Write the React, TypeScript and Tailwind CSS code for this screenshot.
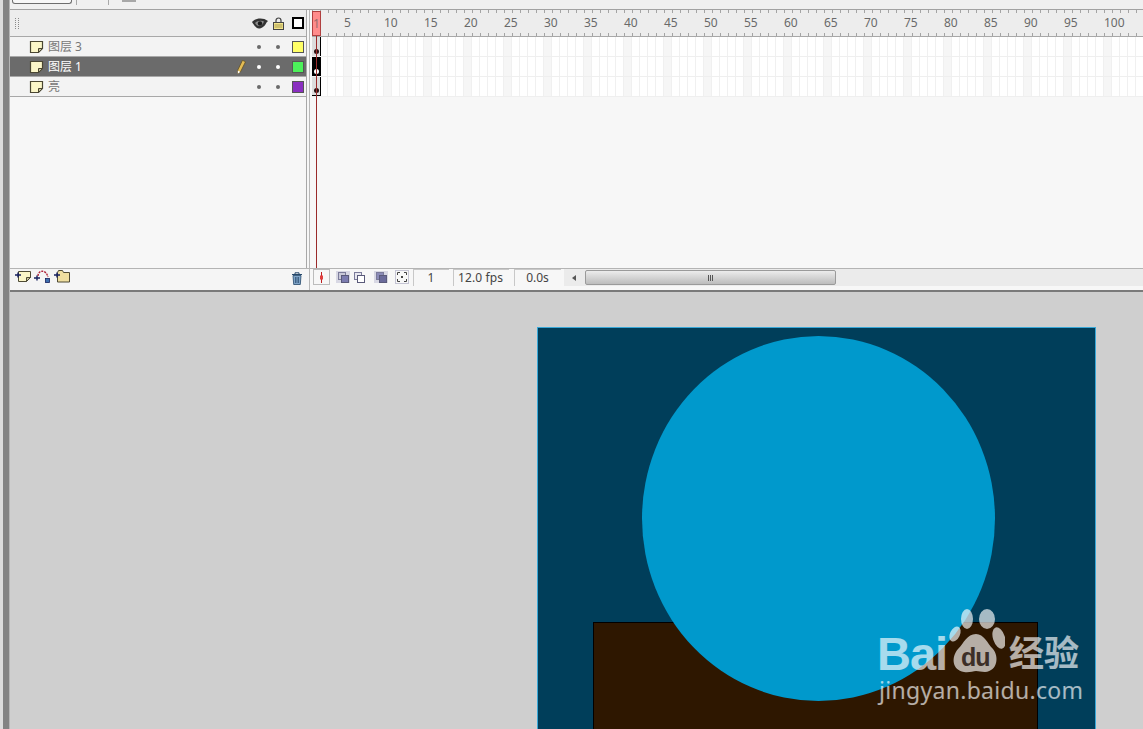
const cjk = "font-['Noto_Sans','Noto_Sans_CJK_SC',sans-serif]";

const frames = Array.from({ length: 104 }, (_, i) => i + 1);
const gripDots = Array.from({ length: 12 }, (_, i) => i);

const layers = [
  { name: "图层 3", color: "bg-[#ffff66]", selected: false },
  { name: "图层 1", color: "bg-[#4cf05a]", selected: true },
  { name: "亮", color: "bg-[#8a2fc0]", selected: false }
];

const PageIcon = () => <svg width="15" height="14" viewBox="0 0 15 14" className="shrink-0">
    <path d="M1.500 1.500h12v7l-4 4h-8z" fill="#fbf6c8" stroke="#4a4632" strokeWidth="1.200" />
    <path d="M13.500 8.500l-4 4v-4z" fill="#c9c49a" stroke="#4a4632" strokeWidth="1" />
  </svg>;

const EyeIcon = () => <svg width="16" height="11" viewBox="0 0 16 11">
    <path d="M0 4C3 0 11 -1 16 3L14.500 4.500C13 8 10 10.500 7 10.500C4 10.500 2 7 0 4z" fill="#333" />
    <path d="M3 5c2-2 6-3 9-1.500-1 3-3 4.500-5 4.500S4 6.500 3 5z" fill="#8a8a8a" />
    <circle cx="8" cy="5.500" r="2.200" fill="#1c1c1c" />
  </svg>;

const LockIcon = () => <svg width="11" height="13" viewBox="0 0 11 13">
    <path d="M3 6V3.500a2.500 2.500 0 0 1 5 0V6" fill="none" stroke="#444" strokeWidth="1.200" />
    <rect x="0.500" y="5.500" width="10" height="7" fill="#f4e68c" stroke="#444" />
    <path d="M1.500 8h8M1.500 10h8" stroke="#a89a50" />
  </svg>;

const PencilIcon = () => <svg width="9" height="14" viewBox="0 0 9 14">
    <path d="M5.500 0.300l3 1.500L3.500 11.800 0.800 13.700 0.800 10z" fill="#e3bc55" stroke="#5a4a20" strokeWidth="0.700" />
    <path d="M0.800 10.500l2.400 1.400-2.400 1.800z" fill="#fff" />
  </svg>;

const AddPageIcon = () => <svg width="16" height="13" viewBox="0 0 16 13">
    <path d="M3.500 1.500h12v6l-4 4h-8z" fill="#fbf6c8" stroke="#4f4b35" />
    <path d="M15.500 7.500l-4 4v-4z" fill="#c9c49a" stroke="#4f4b35" />
    <path d="M0 5h6M3 2.500v5" stroke="#17215e" strokeWidth="1.400" />
  </svg>;

const AddGuideIcon = () => <svg width="17" height="13" viewBox="0 0 17 13">
    <path d="M4 6c0-6 8-7 10 1" fill="none" stroke="#b0243a" strokeWidth="1.400" strokeDasharray="2 1" />
    <path d="M0 8h6M3 5.500v5" stroke="#17215e" strokeWidth="1.400" />
    <rect x="11.500" y="8.500" width="4" height="4" fill="#3d6fae" stroke="#17215e" strokeWidth="0.800" />
  </svg>;

const AddFolderIcon = () => <svg width="16" height="13" viewBox="0 0 16 13">
    <path d="M3.500 12V2.500l1-2h4l1 2h6V12z" fill="#f0dfa0" stroke="#4f4b35" />
    <path d="M0 5h6M3 2.500v5" stroke="#17215e" strokeWidth="1.400" />
  </svg>;

const TrashIcon = () => <svg width="12" height="13" viewBox="0 0 12 13">
    <path d="M1 2.500h10M4 2V0.800h4V2" fill="none" stroke="#25476a" />
    <path d="M2 3.500h8l-0.700 9H2.700z" fill="#7fa4c8" stroke="#25476a" strokeWidth="0.800" />
    <path d="M4.500 5v6M6 5v6M7.500 5v6" stroke="#25476a" strokeWidth="0.700" />
  </svg>;

const OnionIcon = ({
  back,
  front
}: {
  back: string;
  front: string;
}) => <svg width="11" height="11" viewBox="0 0 11 11">
    <rect x="0.500" y="0.500" width="7" height="7" fill={back} stroke="#7b7b9a" />
    <rect x="3.500" y="3.500" width="7" height="7" fill={front} stroke="#5a5a7a" />
  </svg>;

const LayerRow = ({ name, color, selected }: { name: string; color: string; selected: boolean }) => {
  const dot = selected ? "bg-white" : "bg-[#6a6a6a]";
  return <div className={`flex h-5 items-center border-b border-[#a8a8a8] pl-[19px] ${selected ? "bg-[#6b6b6b] text-white" : "bg-[#f3f3f3] text-[#777]"}`}>
      <PageIcon />
      <span className={`ml-[4px] w-[189px] text-[12px] leading-none ${cjk}`}>{name}</span>
      <span className="flex w-[20px] justify-start">{selected && <PencilIcon />}</span>
      <span className={`h-1 w-1 rounded-full ${dot}`} />
      <span className={`ml-[15px] h-1 w-1 rounded-full ${dot}`} />
      <span className={`ml-[12px] h-[12px] w-[12px] border border-[#555] ${color}`} />
    </div>;
};

const FrameRow = ({ selected, bottom }: { selected: boolean; bottom?: boolean }) => <div className="flex h-5 border-b border-[#efefef] bg-white">
    <div className={`relative flex h-full w-[9px] shrink-0 items-end justify-center border-r border-black pb-[2px] ${selected ? "bg-black" : "bg-[#dcdcdc]"} ${bottom ? "border-b" : ""}`}>
      <span className={`h-[5px] w-[5px] rounded-full ${selected ? "bg-white" : "bg-[#2a1010]"}`} />
    </div>
    <div className="w-[7px] shrink-0 border-r border-[#f0f0f0]" />
    {frames.slice(2).map(n => <div key={n} className={`h-full w-2 shrink-0 border-r border-[#f0f0f0] ${n % 5 === 0 ? "bg-[#f6f6f6]" : ""}`} />)}
  </div>;

export default function App() {
  return <div className="relative flex h-[729px] w-[1143px] overflow-hidden bg-[#cecece]">
      <div className="flex w-[10px] shrink-0">
        <div className="w-[3px] bg-[#dcdcdc]" />
        <div className="w-[6px] bg-[#838383]" />
        <div className="w-px bg-[#b5b5b5]" />
      </div>

      <div className="flex min-w-0 flex-1 flex-col">
        {/* strip above the timeline */}
        <div className="flex h-[10px] shrink-0 border-b border-[#a2a2a2] bg-[#f0f0f0]">
          <div className="ml-[2px] h-[4px] w-[60px] rounded-b-[3px] border border-t-0 border-[#6e6e6e] bg-[#f7f7f7]" />
          <div className="ml-[4px] h-[5px] w-px bg-[#a8a8a8]" />
          <div className="ml-[31px] h-[5px] w-px bg-[#a8a8a8]" />
          <div className="ml-[13px] h-[2px] w-[14px] bg-[#a8a8a8]" />
        </div>

        {/* timeline */}
        <div className="flex h-[258px] shrink-0 bg-[#f7f7f7]">
          <div className="w-[297px] shrink-0 border-r border-[#a8a8a8]">
            <div className="flex h-[27px] items-center border-b border-[#a8a8a8] bg-[#ededed]">
              <div className="ml-[5px] grid w-[5px] grid-cols-2 gap-[1px]">
                {gripDots.map(i => <span key={i} className="h-px w-px bg-[#8a8a8a]" />)}
              </div>
              <div className="ml-[232px]"><EyeIcon /></div>
              <div className="ml-[5px]"><LockIcon /></div>
              <div className="ml-[8px] h-[12px] w-[12px] border-2 border-black bg-white" />
            </div>
            {layers.map(l => <LayerRow key={l.name} {...l} />)}
          </div>
          <div className="w-[3px] shrink-0 border-r border-[#b8b8b8]" />

          <div className="relative min-w-0 flex-1 overflow-hidden">
            <div className="ml-[2px] flex h-[27px] w-[900px] border-b border-[#a8a8a8] bg-[#ededed]">
              {frames.map(n => <div key={n} className="relative h-full w-2 shrink-0">
                  <span className="absolute left-0 top-0 h-[3px] w-px bg-[#a4a4a4]" />
                  <span className="absolute bottom-0 left-0 h-[3px] w-px bg-[#a4a4a4]" />
                  {(n % 5 === 0) && <span className={`absolute left-0 top-[6px] text-[12px] leading-[14px] text-[#6a6a6a] ${cjk}`}>{n}</span>}
                </div>)}
            </div>
            <div className="ml-[2px] w-[900px]">
              <FrameRow selected={false} />
              <FrameRow selected />
              <FrameRow selected={false} bottom />
            </div>
            {/* playhead */}
            <div className={`absolute left-[2px] top-[1px] flex h-[25px] w-[9px] items-center justify-center border border-[#b04040] bg-[#ff8c8c] text-[12px] leading-none text-[#9a6a6a] ${cjk}`}>1</div>
            <div className="absolute left-[6px] top-[26px] h-[232px] w-px bg-[#9a2a2a]" />
          </div>
        </div>

        {/* timeline footer */}
        <div className="flex h-[22px] shrink-0 border-t border-[#b4b4b4]">
          <div className="flex w-[297px] shrink-0 items-center gap-[3px] bg-[#f5f5f5] pb-[7px] pl-[5px]">
            <AddPageIcon />
            <AddGuideIcon />
            <AddFolderIcon />
            <div className="ml-[218px] mt-[5px]"><TrashIcon /></div>
          </div>
          <div className="w-[3px] shrink-0 border-r border-[#b8b8b8] bg-[#f5f5f5]" />
          <div className="flex min-w-0 flex-1 items-start bg-[#f7f7f7]">
            <div className="ml-[3px] flex h-[16px] w-[17px] items-center justify-center border border-[#bcbcbc]">
              <svg width="5" height="11" viewBox="0 0 5 11"><path d="M2.500 0v11" stroke="#c02020" /><rect x="1" y="3.500" width="3" height="4" fill="#e04040" /></svg>
            </div>
            <div className="ml-[6px] mt-[2px] flex h-3 w-[14px] items-center justify-center bg-[#d8d8e4]"><OnionIcon back="#c9c9d8" front="#7c7cb0" /></div>
            <div className="ml-[2px] mt-[2px] flex h-3 w-[14px] items-center justify-center"><OnionIcon back="#e8e8f0" front="#ffffff" /></div>
            <div className="ml-[8px] mt-[2px] flex h-3 w-[14px] items-center justify-center bg-[#d8d8e4]"><OnionIcon back="#8b8bb8" front="#6a6a9a" /></div>
            <div className="ml-[7px] mt-px flex h-[14px] w-[14px] items-center justify-center border border-[#c4c4d4]">
              <svg width="10" height="10" viewBox="0 0 10 10"><path d="M0.500 3V0.500H3M7 0.500h2.500V3M9.500 7v2.500H7M3 9.500H0.500V7" fill="none" stroke="#444" /><rect x="4" y="4" width="2" height="2" fill="#444" /></svg>
            </div>
            <div className={`ml-[4px] flex h-[17px] w-[36px] items-center justify-center border-l border-t border-[#c8c8c8] pr-px text-[12px] text-[#444] ${cjk}`}>1</div>
            <div className={`ml-[4px] flex h-[17px] w-[56px] items-center justify-center border-l border-t border-[#c8c8c8] pr-[2px] text-[12px] tracking-[0.1px] text-[#444] ${cjk}`}>12.0 fps</div>
            <div className={`ml-[5px] flex h-[17px] w-[47px] items-center justify-center border-l border-t border-[#c8c8c8] pr-px text-[12px] text-[#444] ${cjk}`}>0.0s</div>
            <div className="ml-[3px] flex h-[17px] min-w-0 flex-1 items-center bg-[#ebebeb]">
              <span className="ml-[8px] h-0 w-0 border-y-[3px] border-r-[4px] border-y-transparent border-r-[#555]" />
              <div className="ml-[9px] flex h-[15px] w-[251px] items-center justify-center rounded-[2px] border border-[#9a9a9a] bg-gradient-to-b from-[#ececec] to-[#bcbcbc]">
                <div className="flex gap-px">
                  <span className="h-[6px] w-px bg-[#555]" />
                  <span className="h-[6px] w-px bg-[#555]" />
                  <span className="h-[6px] w-px bg-[#555]" />
                </div>
              </div>
            </div>
          </div>
        </div>

        {/* stage */}
        <div className="flex-1 border-t-2 border-[#7a7a7a] bg-[#cfcfcf] pl-[527px] pt-[35px]">
          <div className="relative h-[410px] w-[559px] overflow-hidden border border-[#38a8d8] bg-[#003e5a]">
            <div className="absolute left-[55px] top-[294px] h-[120px] w-[445px] border border-black bg-[#2e1700]" />
            <div className="absolute left-[104px] top-[8px] h-[365px] w-[353px] rounded-[50%] bg-[#0099cc]" />
          </div>
        </div>
      </div>

      {/* watermark */}
      <div className="pointer-events-none absolute left-[876px] top-[605px] h-[105px] w-[210px] text-white/65">
        <span className="absolute left-[1px] top-[27px] font-['Liberation_Sans',sans-serif] text-[47px] font-bold leading-[44px] tracking-[-1px]">Bai</span>
        <svg width="58" height="70" viewBox="0 0 58 70" className="absolute left-[71px] top-[2px]">
          <ellipse cx="8" cy="27" rx="5" ry="8" transform="rotate(25 8 27)" fill="white" fillOpacity="0.65" />
          <ellipse cx="20" cy="12" rx="6" ry="10" fill="white" fillOpacity="0.65" />
          <ellipse cx="40" cy="12" rx="8" ry="10" fill="white" fillOpacity="0.65" />
          <ellipse cx="52" cy="31" rx="6" ry="11" transform="rotate(-18 52 31)" fill="white" fillOpacity="0.65" />
          <path d="M29 27c8 0 11 9 17 15 6 7 5 22-8 23-4 0-6-1-9-1s-7 2-12 1c-12-2-13-15-6-23 6-6 9-15 18-15z" fill="white" fillOpacity="0.65" />
        </svg>
        <span className="absolute left-[85px] top-[38px] font-['Liberation_Sans',sans-serif] text-[25px] font-bold leading-[28px] tracking-[-1px] text-[#3c2f28]">du</span>
        <span className={`absolute left-[133px] top-[28px] text-[35px] font-bold leading-[40px] ${cjk}`}>经验</span>
        <span className="absolute left-[3px] top-[72px] font-['Noto_Sans',sans-serif] text-[23px] leading-[26px] tracking-[0.3px]">jingyan.baidu.com</span>
      </div>
    </div>;
}
